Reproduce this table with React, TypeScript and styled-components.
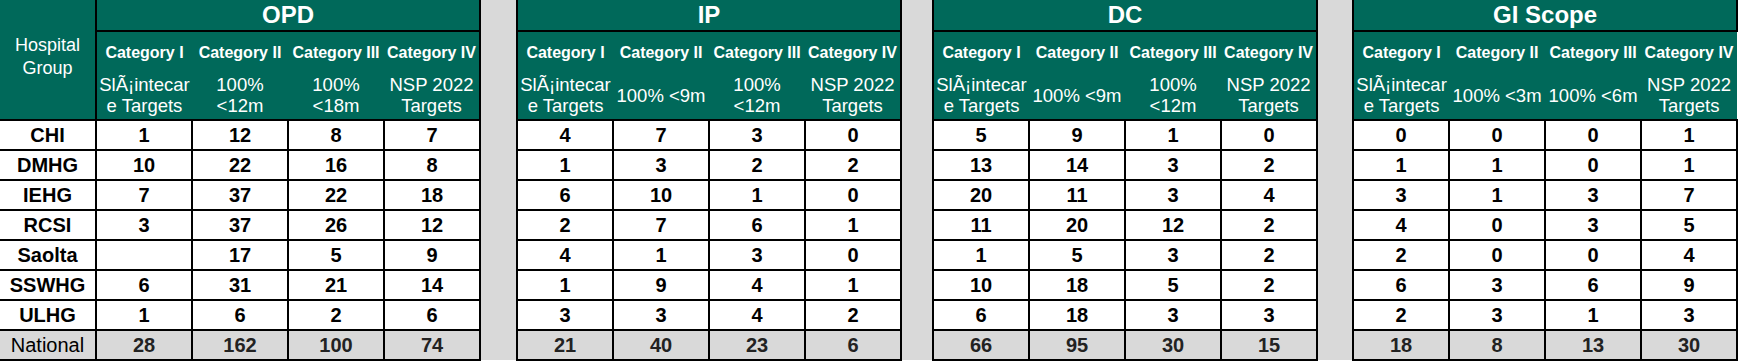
import styled, { createGlobalStyle } from "styled-components";

interface GroupI {
    name: string;
    gap: number;
    targets: string[][];
    rows: (number | null)[][];
}

const GlobalStyle = createGlobalStyle`
    body {
        margin: 0;
        background: #ffffff;
        font-family: "Liberation Sans", Arial, sans-serif;
    }
`;

const hospitals = ["CHI", "DMHG", "IEHG", "RCSI", "Saolta", "SSWHG", "ULHG", "National"];
const categories = ["Category I", "Category II", "Category III", "Category IV"];
const slainte = ["SlÃ¡intecar", "e Targets"];
const nsp = ["NSP 2022", "Targets"];

const groups: GroupI[] = [
    {
        name: "OPD",
        gap: 37,
        targets: [slainte, ["100%", "<12m"], ["100%", "<18m"], nsp],
        rows: [
            [1, 12, 8, 7], [10, 22, 16, 8], [7, 37, 22, 18], [3, 37, 26, 12],
            [null, 17, 5, 9], [6, 31, 21, 14], [1, 6, 2, 6], [28, 162, 100, 74],
        ],
    },
    {
        name: "IP",
        gap: 32,
        targets: [slainte, ["100% <9m"], ["100%", "<12m"], nsp],
        rows: [
            [4, 7, 3, 0], [1, 3, 2, 2], [6, 10, 1, 0], [2, 7, 6, 1],
            [4, 1, 3, 0], [1, 9, 4, 1], [3, 3, 4, 2], [21, 40, 23, 6],
        ],
    },
    {
        name: "DC",
        gap: 36,
        targets: [slainte, ["100% <9m"], ["100%", "<12m"], nsp],
        rows: [
            [5, 9, 1, 0], [13, 14, 3, 2], [20, 11, 3, 4], [11, 20, 12, 2],
            [1, 5, 3, 2], [10, 18, 5, 2], [6, 18, 3, 3], [66, 95, 30, 15],
        ],
    },
    {
        name: "GI Scope",
        gap: 0,
        targets: [slainte, ["100% <3m"], ["100% <6m"], nsp],
        rows: [
            [0, 0, 0, 1], [1, 1, 0, 1], [3, 1, 3, 7], [4, 0, 3, 5],
            [2, 0, 0, 4], [6, 3, 6, 9], [2, 3, 1, 3], [18, 8, 13, 30],
        ],
    },
];

const green = "#00695a";
const grey = "#d9d9d9";
const line = "2px solid #000";

const Table = styled.table`
    border-collapse: collapse;
    table-layout: fixed;
    width: 1738px;
    color: #000;
    text-align: center;
`;

const GroupHead = styled.th`
    background: ${green};
    color: #fff;
    font-size: 18px;
    font-weight: normal;
    line-height: 23px;
    padding: 0 0 6px;
    border-right: ${line};
    border-bottom: ${line};
`;

const Title = styled.th`
    height: 30px;
    padding: 0;
    background: ${green};
    color: #fff;
    font-size: 24px;
    font-weight: bold;
    line-height: 26px;
    border: ${line};
    border-top: none;
`;

const Category = styled.th`
    height: 41px;
    padding: 0;
    background: ${green};
    color: #fff;
    font-size: 16px;
    font-weight: bold;
    line-height: 18px;
    white-space: nowrap;
`;

const Target = styled.th`
    height: 44px;
    padding: 0 0 2px;
    background: ${green};
    color: #fff;
    font-size: 18.5px;
    font-weight: normal;
    line-height: 21px;
    white-space: nowrap;
    border-bottom: ${line};
`;

const Gap = styled.td`
    background: ${grey};
    border-left: ${line};
    border-right: ${line};
    padding: 0;
`;

const Label = styled.td<{ $total?: boolean }>`
    height: 28px;
    padding: 0;
    font-size: 20px;
    line-height: 22px;
    font-weight: ${({ $total }) => ($total ? "normal" : "bold")};
    background: ${({ $total }) => ($total ? grey : "#fff")};
    border-right: ${line};
    border-bottom: ${line};
`;

const Cell = styled.td<{ $total?: boolean }>`
    padding: 0;
    font-size: 20px;
    line-height: 22px;
    font-weight: bold;
    color: ${({ $total }) => ($total ? "#222" : "#000")};
    background: ${({ $total }) => ($total ? grey : "#fff")};
    border: ${line};
`;

const App = () => {
    return (<>
        <GlobalStyle />
        <Table>
            <colgroup>
                <col style={{ width: 96 }} />
                {groups.map(g => [
                    ...categories.map(c => <col key={g.name + c} style={{ width: 96 }} />),
                    g.gap ? <col key={g.name + "gap"} style={{ width: g.gap }} /> : null,
                ])}
            </colgroup>
            <tbody>
                <tr>
                    <GroupHead rowSpan={3}>Hospital<br />Group</GroupHead>
                    {groups.map((g, i) => [
                        <Title key={g.name} colSpan={4}>{g.name}</Title>,
                        g.gap ? <Gap key={"gap" + i} rowSpan={3} /> : null,
                    ])}
                </tr>
                <tr>
                    {groups.map(g => categories.map(c => <Category key={g.name + c}>{c}</Category>))}
                </tr>
                <tr>
                    {groups.map(g => g.targets.map((t, i) => (
                        <Target key={g.name + i}>
                            {t.map((l, j) => <div key={j}>{l}</div>)}
                        </Target>
                    )))}
                </tr>
                {hospitals.map((h, r) => {
                    const total = h === "National";
                    return (
                        <tr key={h}>
                            <Label $total={total}>{h}</Label>
                            {groups.map(g => [
                                ...g.rows[r].map((v, i) => (
                                    <Cell key={g.name + i} $total={total}>{v ?? ""}</Cell>
                                )),
                                g.gap ? <Gap key={g.name + "gap"} /> : null,
                            ])}
                        </tr>
                    );
                })}
            </tbody>
        </Table>
    </>);
};

export default App;
